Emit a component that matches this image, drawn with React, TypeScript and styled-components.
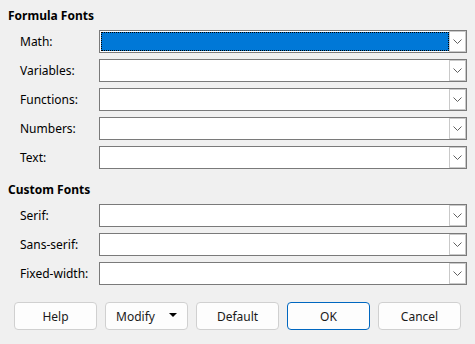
import React from "react";
import styled, { createGlobalStyle } from "styled-components";

const Global = createGlobalStyle`
  html, body { margin: 0; padding: 0; background: #f0f0f0; }
  body { font-family: "Noto Sans", "Open Sans", sans-serif; font-size: 12px; color: #000; }
`;

const Dialog = styled.div`
  width: 475px;
  height: 344px;
  box-sizing: border-box;
  padding: 8px 8px 0 8px;
  display: flex;
  flex-direction: column;
  background: #f0f0f0;
`;

const Heading = styled.div`
  font-weight: 700;
  font-size: 12px;
  line-height: 16px;
  height: 16px;
  margin-bottom: 6px;
`;

const Rows = styled.div`
  display: flex;
  flex-direction: column;
  gap: 6px;
  padding-left: 12px;
`;

const Row = styled.div`
  display: grid;
  grid-template-columns: 79px 1fr;
  align-items: center;
  height: 23px;
`;

const Label = styled.span`
  font-size: 12px;
  line-height: 16px;
`;

const Combo = styled.div`
  height: 23px;
  box-sizing: border-box;
  border: 1px solid #7a7a7a;
  background: #fff;
  display: flex;
  padding: 0;
`;

const Field = styled.div<{ $selected?: boolean }>`
  flex: 1;
  margin: 1px 0 1px 1px;
  box-sizing: border-box;
  background: ${(p) => (p.$selected ? "#0078d7" : "#fff")};
  border: ${(p) => (p.$selected ? "1px dotted #000" : "1px solid transparent")};
`;

const DropBtn = styled.div`
  width: 17px;
  box-sizing: border-box;
  border: 1px solid #c9c9c9;
  background: #fff;
  display: flex;
  align-items: center;
  justify-content: center;
`;

const Section = styled.div<{ $gap?: number }>`
  margin-top: ${(p) => p.$gap ?? 0}px;
`;

const Buttons = styled.div`
  display: flex;
  gap: 8px;
  padding-left: 6px;
  margin-top: 17px;
`;

const Button = styled.button<{ $default?: boolean }>`
  width: 83px;
  height: 28px;
  box-sizing: border-box;
  background: #fdfdfd;
  border: 1px solid ${(p) => (p.$default ? "#0067c0" : "#d0d0d0")};
  border-radius: 4px;
  font-family: "Noto Sans", "Open Sans", sans-serif;
  font-size: 12px;
  color: #1a1a1a;
  display: flex;
  align-items: center;
  justify-content: center;
  gap: 14px;
  padding: 0;
`;

const Caret = styled.span`
  width: 0;
  height: 0;
  border-left: 4px solid transparent;
  border-right: 4px solid transparent;
  border-top: 4px solid #000;
  margin-bottom: 3px;
`;

const Chevron = () => (
  <svg width="9" height="5" viewBox="0 0 9 5">
    <path d="M0.5 0.5 L4.5 4.5 L8.5 0.5" fill="none" stroke="#606060" strokeWidth="1" />
  </svg>
);

const FontRow = ({ label, selected }: { label: string; selected?: boolean }) => (
  <Row>
    <Label>{label}</Label>
    <Combo>
      <Field $selected={selected} />
      <DropBtn>
        <Chevron />
      </DropBtn>
    </Combo>
  </Row>
);

export default function App() {
  return (
    <>
      <Global />
      <Dialog>
        <Section>
          <Heading>Formula Fonts</Heading>
          <Rows>
            <FontRow label="Math:" selected />
            <FontRow label="Variables:" />
            <FontRow label="Functions:" />
            <FontRow label="Numbers:" />
            <FontRow label="Text:" />
          </Rows>
        </Section>
        <Section $gap={13}>
          <Heading>Custom Fonts</Heading>
          <Rows>
            <FontRow label="Serif:" />
            <FontRow label="Sans-serif:" />
            <FontRow label="Fixed-width:" />
          </Rows>
        </Section>
        <Buttons>
          <Button>Help</Button>
          <Button>
            Modify <Caret />
          </Button>
          <Button>Default</Button>
          <Button $default>OK</Button>
          <Button>Cancel</Button>
        </Buttons>
      </Dialog>
    </>
  );
}
